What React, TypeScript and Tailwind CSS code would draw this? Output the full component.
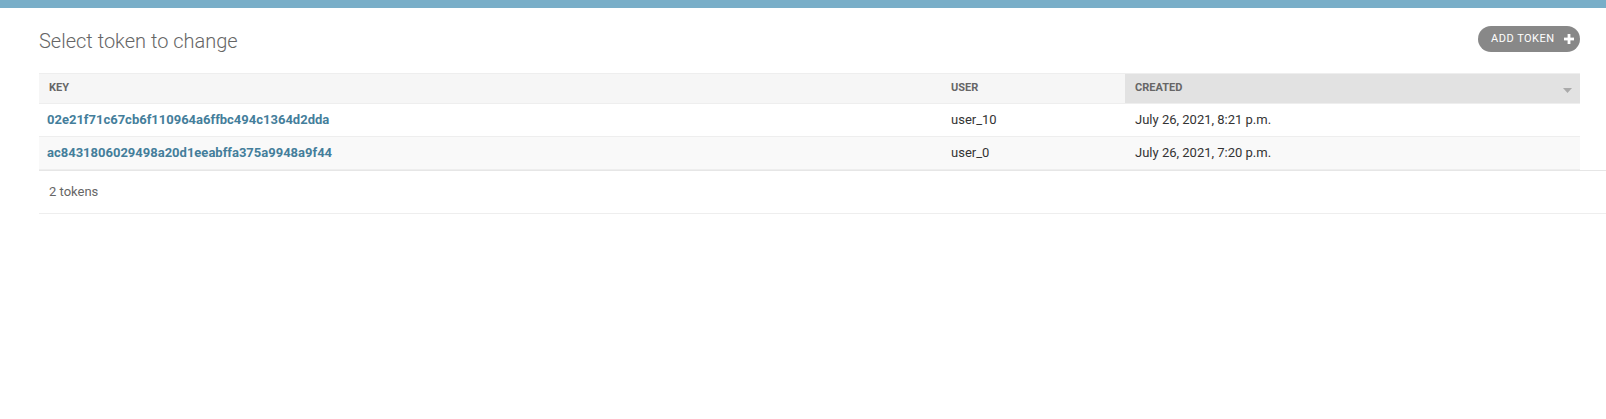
import React from 'react';

interface Token {
  key: string;
  user: string;
  created: string;
}

const tokens: Token[] = [
  { key: '02e21f71c67cb6f110964a6ffbc494c1364d2dda', user: 'user_10', created: 'July 26, 2021, 8:21 p.m.' },
  { key: 'ac8431806029498a20d1eeabffa375a9948a9f44', user: 'user_0', created: 'July 26, 2021, 7:20 p.m.' },
];

export default function App() {
  return (
    <div className="min-h-[419px] bg-white text-[13px] text-[#333]" style={{ fontFamily: 'Roboto, "Liberation Sans", sans-serif' }}>
      {/* Header strip */}
      <div className="h-[8px] bg-[#79aec8]" />

      <div className="pl-[39px] pt-[21px]">
        {/* Title + object tools */}
        <div className="flex items-start w-[1541px]">
          <h1 className="flex-1 text-[20px] leading-[24px] font-light text-[#666] mb-[20px]">Select token to change</h1>
          <a className="mt-[-3px] h-[26px] w-[102px] flex items-center pl-[13px] rounded-full bg-[#888] text-white text-[11px] uppercase tracking-[0.5px] cursor-pointer">
            <span>Add token</span>
            <svg className="ml-[9px]" width="10" height="10" viewBox="0 0 10 10">
              <rect x="3.6" y="0" width="2.8" height="10" fill="white" />
              <rect x="0" y="3.6" width="10" height="2.8" fill="white" />
            </svg>
          </a>
        </div>

        {/* Result table */}
        <table className="w-[1541px] table-fixed border-collapse border-t border-[#eee]">
          <colgroup>
            <col className="w-[902px]" />
            <col className="w-[184px]" />
            <col />
          </colgroup>
          <thead>
            <tr className="h-[30px] bg-[#f6f6f6] border-b border-[#eee]">
              <th className="px-[10px] text-left text-[11px] font-bold uppercase text-[#666]">Key</th>
              <th className="px-[10px] text-left text-[11px] font-bold uppercase text-[#666]">User</th>
              <th className="px-[10px] text-left text-[11px] font-bold uppercase text-[#666] bg-[#e2e2e2]">
                <div className="flex items-center">
                  <span className="flex-1">Created</span>
                  <svg className="mr-[-2px] mt-[3px]" width="9" height="5" viewBox="0 0 9 5">
                    <path d="M0 0 L9 0 L4.5 5 Z" fill="#aaa" />
                  </svg>
                </div>
              </th>
            </tr>
          </thead>
          <tbody>
            {tokens.map((t, i) => (
              <tr key={t.key} className={`border-b border-[#eee] ${i % 2 === 1 ? 'bg-[#f9f9f9]' : 'bg-white'}`}>
                <th className="px-[8px] py-[8px] leading-[16px] text-left font-bold text-[#447e9b]">
                  <a className="cursor-pointer">{t.key}</a>
                </th>
                <td className="px-[10px] py-[8px] leading-[16px]">{t.user}</td>
                <td className="px-[10px] py-[8px] leading-[16px]">{t.created}</td>
              </tr>
            ))}
          </tbody>
        </table>

        {/* Paginator */}
        <p className="border-t border-b border-[#e6e6e6] border-b-[#eee] px-[10px] py-[10px] leading-[22px] text-[#666]">2 tokens</p>
      </div>
    </div>
  );
}
